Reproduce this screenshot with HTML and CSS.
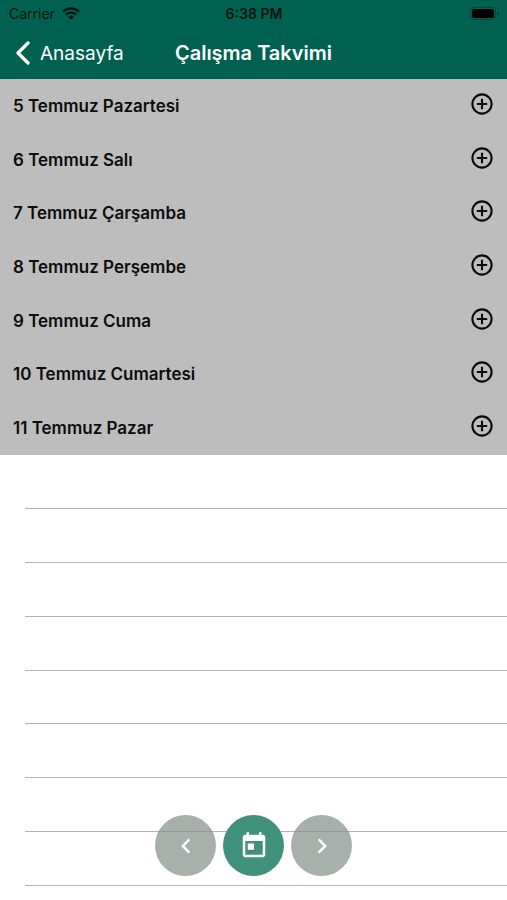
FILE: index.html
```html
<!DOCTYPE html>
<html lang="tr">
<head>
<meta charset="utf-8">
<meta name="viewport" content="width=device-width, initial-scale=1">
<title>Çalışma Takvimi</title>
<link rel="stylesheet" href="styles.css">
</head>
<body>
<svg class="symbols" aria-hidden="true">
  <symbol id="plus" viewBox="0 0 24 24"><circle cx="12" cy="12" r="9.6" fill="none" stroke="currentColor" stroke-width="2.1"/><path d="M12 6.8v10.4M6.8 12h10.4" fill="none" stroke="currentColor" stroke-width="2.1"/></symbol>
</svg>
<header class="top">
  <div class="status">
    <div class="carrier">
      <span>Carrier</span>
      <svg class="wifi" viewBox="0 0 18 13" aria-hidden="true"><path d="M1 4.6a11.6 11.6 0 0 1 16 0M3.9 7.6a7.4 7.4 0 0 1 10.2 0" fill="none" stroke="currentColor" stroke-width="2.3"/><path d="M9 12.8 6.1 9.9a4.2 4.2 0 0 1 5.8 0z" fill="currentColor"/></svg>
    </div>
    <span class="time">6:38 PM</span>
    <svg class="battery" viewBox="0 0 29 13" aria-hidden="true"><rect x=".5" y=".5" width="25" height="12" rx="3.5" fill="none" stroke="currentColor" opacity=".25"/><rect x="2" y="2" width="22" height="9" rx="2" fill="currentColor"/><path d="M27 4.5q2 .6 2 2t-2 2z" fill="currentColor" opacity=".3"/></svg>
  </div>
  <nav class="bar">
    <a class="back" href="#">
      <svg class="back-icon" viewBox="0 0 16 24" aria-hidden="true"><path d="M13 2 3 12l10 10" fill="none" stroke="currentColor" stroke-width="3.2" stroke-linecap="round" stroke-linejoin="round"/></svg>
      <span>Anasayfa</span>
    </a>
    <h1 class="title">Çalışma Takvimi</h1>
  </nav>
</header>
<main>
  <ul class="days">
    <li class="day"><span>5 Temmuz Pazartesi</span><button class="add" aria-label="5 Temmuz ekle"><svg><use href="#plus"/></svg></button></li>
    <li class="day"><span>6 Temmuz Salı</span><button class="add" aria-label="6 Temmuz ekle"><svg><use href="#plus"/></svg></button></li>
    <li class="day"><span>7 Temmuz Çarşamba</span><button class="add" aria-label="7 Temmuz ekle"><svg><use href="#plus"/></svg></button></li>
    <li class="day"><span>8 Temmuz Perşembe</span><button class="add" aria-label="8 Temmuz ekle"><svg><use href="#plus"/></svg></button></li>
    <li class="day"><span>9 Temmuz Cuma</span><button class="add" aria-label="9 Temmuz ekle"><svg><use href="#plus"/></svg></button></li>
    <li class="day"><span>10 Temmuz Cumartesi</span><button class="add" aria-label="10 Temmuz ekle"><svg><use href="#plus"/></svg></button></li>
    <li class="day"><span>11 Temmuz Pazar</span><button class="add" aria-label="11 Temmuz ekle"><svg><use href="#plus"/></svg></button></li>
  </ul>
  <div class="empty" aria-hidden="true">
    <div class="slot"></div><div class="slot"></div><div class="slot"></div><div class="slot"></div>
    <div class="slot"></div><div class="slot"></div><div class="slot"></div><div class="slot"></div>
  </div>
</main>
<div class="pager">
  <button class="round" aria-label="Önceki hafta"><svg viewBox="0 0 24 24"><path d="M15.41 7.41 14 6l-6 6 6 6 1.41-1.41L10.83 12z"/></svg></button>
  <button class="round today" aria-label="Bugün"><svg viewBox="0 0 24 24"><path d="M19 3h-1V1h-2v2H8V1H6v2H5c-1.11 0-1.99.9-1.99 2L3 19c0 1.1.89 2 2 2h14c1.1 0 2-.9 2-2V5c0-1.1-.9-2-2-2zm0 16H5V8h14v11zM7 10h5v5H7z"/></svg></button>
  <button class="round" aria-label="Sonraki hafta"><svg viewBox="0 0 24 24"><path d="M10 6 8.59 7.41 13.17 12l-4.58 4.59L10 18l6-6z"/></svg></button>
</div>
</body>
</html>
```
FILE: styles.css
```css
* {
  box-sizing: border-box;
}

body {
  margin: 0;
  min-height: 100vh;
  background: #fff;
  color: #0c0c0c;
  font-family: Inter, "Liberation Sans", sans-serif;
}

button {
  padding: 0;
  border: 0;
  background: none;
  color: inherit;
}

.symbols {
  position: absolute;
  width: 0;
  height: 0;
}

.top {
  background: #006150;
}

.status,
.bar {
  display: grid;
  grid-template-columns: 1fr auto 1fr;
  align-items: center;
}

.status {
  height: 27px;
  padding: 0 8px 0 9px;
  color: #03150f;
  font-size: 14px;
}

.carrier {
  display: flex;
  align-items: center;
  gap: 7px;
}

.wifi {
  width: 18px;
  height: 13px;
}

.time {
  font-size: 14px;
  font-weight: 600;
}

.battery {
  justify-self: end;
  width: 29px;
  height: 13px;
  color: #000;
}

.bar {
  height: 52px;
  padding: 0 15px;
  color: #fff;
}

.back {
  display: flex;
  align-items: center;
  gap: 9px;
  color: inherit;
  font-size: 19px;
  text-decoration: none;
}

.back-icon {
  width: 16px;
  height: 24px;
}

.title {
  margin: 0;
  font-size: 20px;
  font-weight: 600;
}

.days {
  display: grid;
  grid-auto-rows: 1fr;
  min-height: 376px;
  margin: 0;
  padding: 0;
  background: #bdbdbd;
  list-style: none;
}

.day {
  display: flex;
  align-items: center;
  justify-content: space-between;
  padding: 0 13px;
  font-size: 17px;
  font-weight: 600;
}

.add {
  display: flex;
  padding-bottom: 4px;
}

.add svg {
  width: 24px;
  height: 24px;
}

.empty {
  display: grid;
  grid-auto-rows: 1fr;
  min-height: 431px;
  padding-left: 25px;
}

.slot {
  border-bottom: 1px solid #b4b4b4;
}

.pager {
  position: fixed;
  right: 0;
  bottom: 24px;
  left: 0;
  display: flex;
  justify-content: center;
  gap: 7px;
}

.round {
  display: grid;
  place-items: center;
  width: 61px;
  height: 61px;
  border-radius: 50%;
  background: rgba(130, 143, 134, 0.7);
  color: #fff;
}

.round svg {
  width: 30px;
  height: 30px;
  fill: currentColor;
}

.today {
  background: #3f917b;
}
```
